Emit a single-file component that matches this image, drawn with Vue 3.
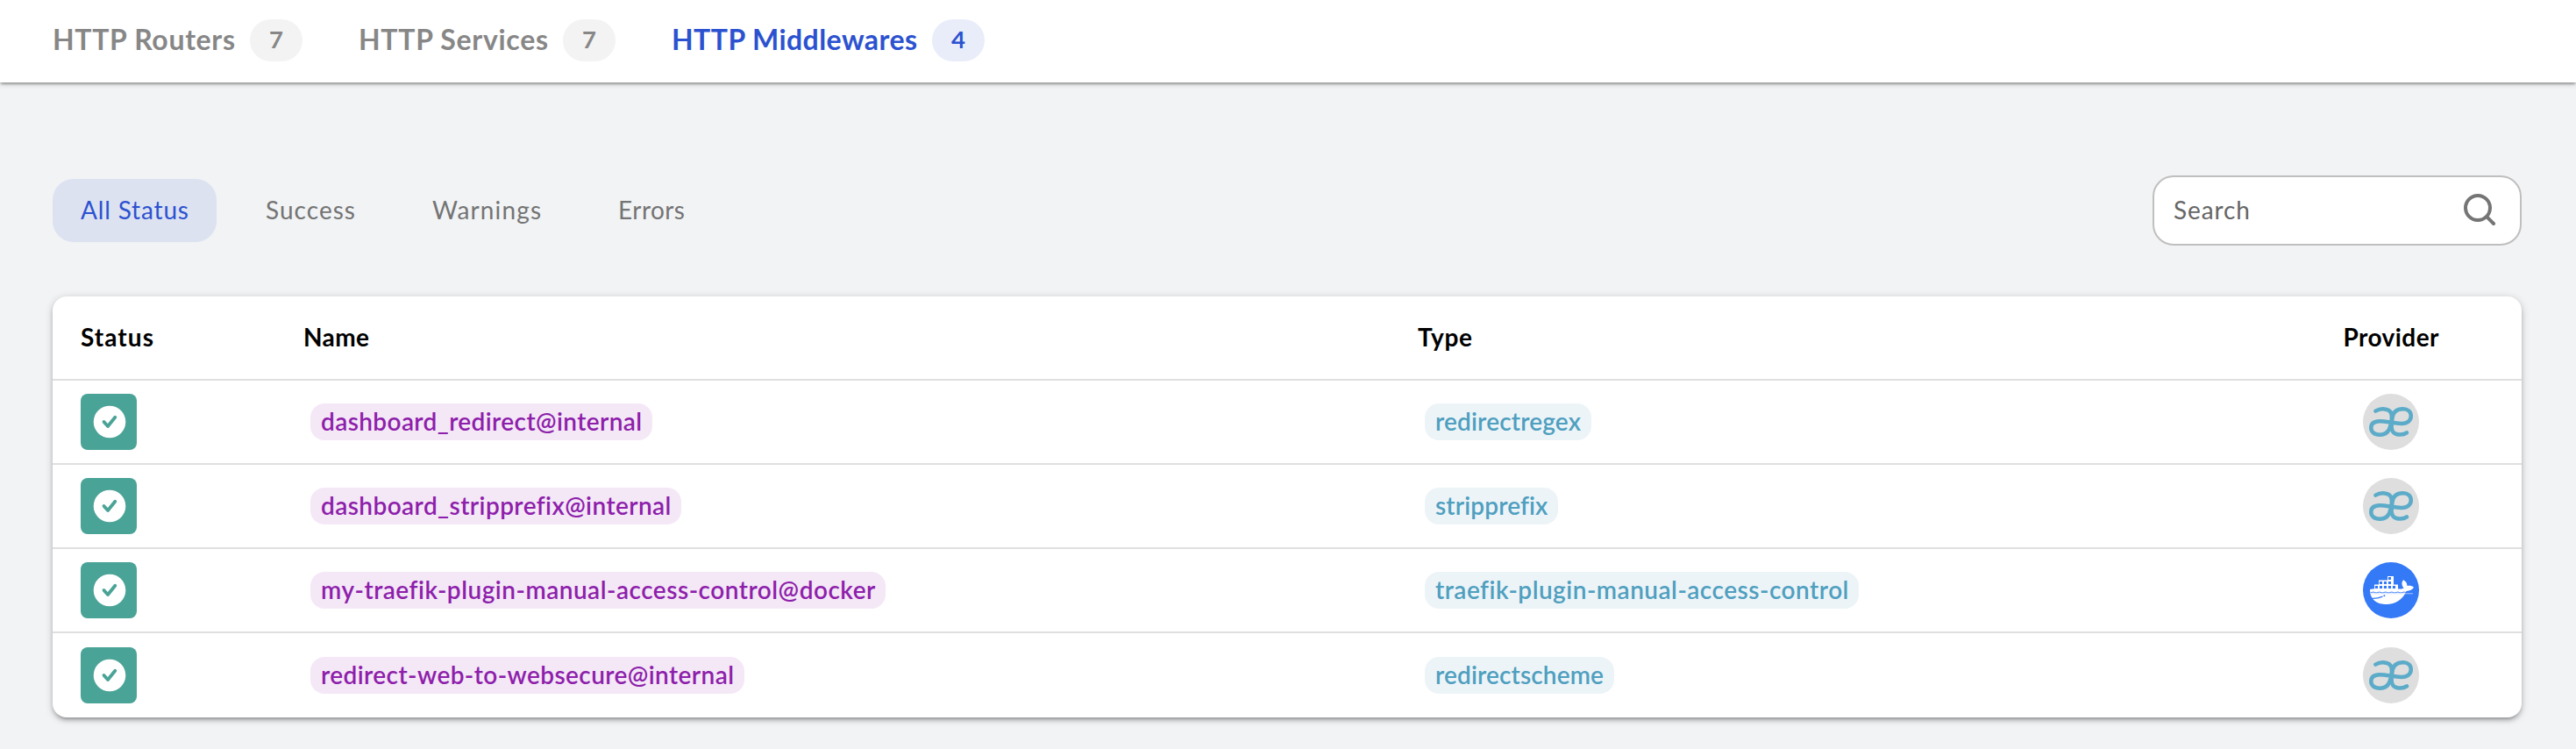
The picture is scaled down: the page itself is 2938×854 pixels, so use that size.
<script setup>
const tabs = [
  { label: 'HTTP Routers', count: 7, width: 208 },
  { label: 'HTTP Services', count: 7, width: 216 },
  { label: 'HTTP Middlewares', count: 4, width: 280, active: true }
]
const filters = [
  { label: 'All Status', width: 123, active: true },
  { label: 'Success', width: 102 },
  { label: 'Warnings', width: 124 },
  { label: 'Errors', width: 76 }
]
const rows = [
  { name: 'dashboard_redirect@internal', nameWidth: 366, type: 'redirectregex', typeWidth: 166, provider: 'internal' },
  { name: 'dashboard_stripprefix@internal', nameWidth: 399, type: 'stripprefix', typeWidth: 128, provider: 'internal' },
  { name: 'my-traefik-plugin-manual-access-control@docker', nameWidth: 632, type: 'traefik-plugin-manual-access-control', typeWidth: 471, provider: 'docker' },
  { name: 'redirect-web-to-websecure@internal', nameWidth: 471, type: 'redirectscheme', typeWidth: 192, provider: 'internal' }
]

// Spreads a label evenly over the given width with letter spacing.
const vFit = {
  mounted(el, { value }) {
    const natural = el.getBoundingClientRect().width
    el.style.letterSpacing = (value - natural) / (el.textContent.length - 1) + 'px'
    el.style.width = value + 'px'
  }
}

// Gaps inside the container stack: bottom row, middle row, top.
const blocks = [
  [13.9, 27], [18.9, 27], [23.9, 27], [28.9, 27], [33.9, 27],
  [18.9, 22], [23.9, 22], [28.9, 22], [28.9, 17]
]
</script>

<template>
  <div class="page">
    <nav class="tabs">
      <a v-for="t in tabs" :key="t.label" class="tab" :class="{ active: t.active }">
        <span v-fit="t.width" class="fit">{{ t.label }}</span>
        <span class="badge">{{ t.count }}</span>
      </a>
    </nav>

    <main class="content">
      <div class="toolbar">
        <div class="filters">
          <button v-for="f in filters" :key="f.label" class="filter" :class="{ active: f.active }">
            <span v-fit="f.width" class="fit">{{ f.label }}</span>
          </button>
        </div>
        <div class="search">
          <span v-fit="87" class="fit">Search</span>
          <svg class="search-icon" viewBox="0 0 40 40">
            <circle cx="18" cy="17" r="14" />
            <path d="M28.2 27.2 L36 35" />
          </svg>
        </div>
      </div>

      <section class="card">
        <div class="row head">
          <div><span v-fit="83" class="fit">Status</span></div>
          <div><span v-fit="75" class="fit">Name</span></div>
          <div><span v-fit="62" class="fit">Type</span></div>
          <div class="provider"><span v-fit="109" class="fit">Provider</span></div>
        </div>
        <div v-for="r in rows" :key="r.name" class="row">
          <div>
            <svg class="status" viewBox="0 0 64 64">
              <rect width="64" height="64" rx="8" fill="#4aa397" />
              <circle cx="33" cy="32" r="18.3" fill="#fff" />
              <path d="M26.5 32 L31 37 L39.3 26.7" fill="none" stroke="#4aa397" stroke-width="3.8" stroke-linecap="round" stroke-linejoin="round" />
            </svg>
          </div>
          <div><span class="pill name"><span v-fit="r.nameWidth" class="fit">{{ r.name }}</span></span></div>
          <div><span class="pill type"><span v-fit="r.typeWidth" class="fit">{{ r.type }}</span></span></div>
          <div class="provider">
            <svg v-if="r.provider === 'internal'" class="avatar" viewBox="0 0 64 64">
              <circle cx="32" cy="32" r="32" fill="#dedede" />
              <g fill="none" stroke="#5babc9" stroke-width="4.5" stroke-linecap="round">
                <path d="M14.4 19.6 C20 16.3 30.3 16.2 32.3 22.5 C34 28 31.9 35 30.2 40 C27.8 45.3 24 46.7 19.5 46.7 C12.7 46.7 9.3 43.3 9.3 38.8 C9.3 33.7 13 31.3 19 31.2 C27 31.2 36 34 44 33.9 C51 33.8 54.8 30.5 54.8 25.3 C54.8 20.2 51.3 17.3 45.5 17.3 C38.5 17.4 34.5 20.8 33.6 27 C32.8 33 31.2 39 34.2 43.3 C37 47.6 46 47.3 50 44.4" />
              </g>
            </svg>
            <svg v-else class="avatar" viewBox="0 0 64 64">
              <circle cx="32" cy="32" r="32" fill="#3479f6" />
              <path fill="#fff" d="M8 31 C10 30.5 12 30.6 13 30.3 V25.5 H18 V20.6 H28 V16 H35 V25.5 H40 V30.5 C43 30.8 45.5 30.4 46.5 29.5 C43.8 26.5 44 22.5 46 20.3 C49 21.6 50.6 24.2 50.4 27.1 C53 26.4 56 27 58 28.4 C56.5 31.5 53.5 32.5 49.5 33 C45.8 42 37 48 27 48 C17 48 8 43.8 8 31 Z" />
              <rect v-for="(b, i) in blocks" :key="i" :x="b[0]" :y="b[1]" width="3.1" height="3" fill="#3479f6" />
              <path d="M8.5 34.8 L12 34 L15 35 L19 34 L22 35 L26 34 L29 35 L33 34 L36 35 L40 34 L43 35 L47 34 L50 34.8" fill="none" stroke="#3479f6" stroke-width=".9" />
              <path d="M8 35.8 H57" stroke="#c9dcff" stroke-width=".8" />
              <path d="M8 41.3 C13 41.8 18 41 22.5 39.2" fill="none" stroke="#3479f6" stroke-width="1.3" />
              <circle cx="24.4" cy="38.3" r="1" fill="#3479f6" />
            </svg>
          </div>
        </div>
      </section>
    </main>
  </div>
</template>

<style>
body {
  background: #f1f3f5;
}
</style>

<style scoped>
.page {
  height: 854px;
  overflow: hidden;
  background: #f1f3f5;
  font-family: Lato, "Open Sans", sans-serif;
  font-size: 28px;
  line-height: 40px;
}
.fit {
  display: inline-block;
  padding-bottom: 2px;
  white-space: nowrap;
}
.tabs {
  display: flex;
  align-items: center;
  gap: 64px;
  height: 94px;
  box-sizing: border-box;
  padding: 0 60px 2px;
  background: #fff;
  box-shadow: 0 2px 6px rgba(0, 0, 0, .2), 0 2px 2px rgba(0, 0, 0, .14), 0 4px 2px -2px rgba(0, 0, 0, .12);
}
.tab {
  display: flex;
  align-items: center;
  gap: 17px;
  font-size: 32px;
  font-weight: 700;
  color: #878787;
}
.badge {
  width: 60px;
  height: 48px;
  border-radius: 24px;
  background: #f3f3f3;
  font-size: 27.5px;
  line-height: 46px;
  text-align: center;
}
.tab.active {
  color: #2c52d0;
}
.tab.active .badge {
  background: #e9edfa;
}
.content {
  padding: 106px 62px 0 60px;
}
.toolbar {
  display: flex;
  justify-content: space-between;
  align-items: center;
  height: 80px;
}
.filters {
  display: flex;
  gap: 24px;
}
.filter {
  height: 72px;
  padding: 0 32px;
  border: 0;
  border-radius: 24px;
  background: none;
  font: inherit;
  color: #747474;
}
.filter.active {
  background: #dde2f1;
  color: #2c52d0;
}
.search {
  display: flex;
  align-items: center;
  justify-content: space-between;
  width: 421px;
  height: 80px;
  box-sizing: border-box;
  padding: 0 26px 0 22px;
  border: 2px solid #bfbfbf;
  border-radius: 24px;
  background: #fff;
  color: #666;
}
.search-icon {
  width: 40px;
  height: 40px;
  fill: none;
  stroke: #757575;
  stroke-width: 4;
  stroke-linecap: round;
}
.card {
  margin-top: 58px;
  height: 480px;
  border-radius: 16px;
  background: #fff;
  box-shadow: 0 2px 10px rgba(0, 0, 0, .2), 0 4px 4px rgba(0, 0, 0, .14), 0 6px 2px -4px rgba(0, 0, 0, .12);
}
.row {
  display: grid;
  grid-template-columns: 254px 1271px 1fr 172px;
  align-items: center;
  height: 96px;
  box-sizing: border-box;
  padding: 0 63px 0 32px;
  border-bottom: 2px solid #dfdfdf;
}
.row:last-child {
  border-bottom: 0;
}
.head {
  font-weight: 700;
  color: #000;
}
.head .fit {
  padding-bottom: 3px;
}
.provider {
  display: flex;
  justify-content: center;
}
.status,
.avatar {
  display: block;
  width: 64px;
  height: 64px;
}
.pill {
  display: block;
  width: max-content;
  height: 42px;
  margin-left: 8px;
  padding: 0 12px;
  border-radius: 16px;
  font-weight: 600;
}
.pill.name {
  background: #f4e8f7;
  color: #8e1fab;
}
.pill.type {
  background: #edf4f8;
  color: #4f9fbf;
}
</style>
